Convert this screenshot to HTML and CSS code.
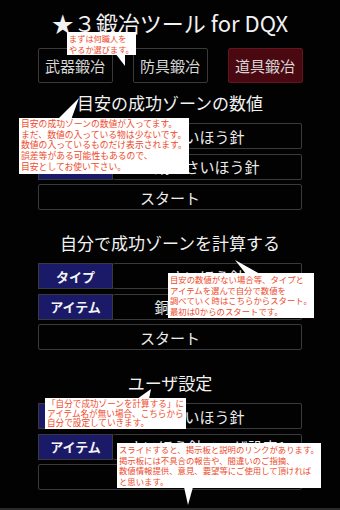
FILE: index.html
```html
<!DOCTYPE html>
<html lang="ja">
  <head>
    <meta charset="UTF-8" />
    <meta name="viewport" content="width=device-width, initial-scale=1.0" />
    <title>★３鍛冶ツール for DQX</title>
    <link rel="stylesheet" href="styles.css">
  </head>
  <body>
    <div class="screen">
      <h1 class="title">★３鍛冶ツール for DQX</h1>

      <div class="jobs">
        <div class="job">武器鍛冶</div>
        <div class="job">防具鍛冶</div>
        <div class="job active">道具鍛冶</div>
      </div>

      <section class="group">
        <h2>目安の成功ゾーンの数値</h2>
        <div class="row"><div class="label">タイプ</div><div class="value">さいほう針</div></div>
        <div class="row"><div class="label">アイテム</div><div class="value">銅のさいほう針</div></div>
        <div class="row"><div class="value">スタート</div></div>
      </section>

      <section class="group">
        <h2>自分で成功ゾーンを計算する</h2>
        <div class="row"><div class="label">タイプ</div><div class="value">さいほう針</div></div>
        <div class="row"><div class="label">アイテム</div><div class="value">銅のさいほう針</div></div>
        <div class="row"><div class="value">スタート</div></div>
      </section>

      <section class="group">
        <h2>ユーザ設定</h2>
        <div class="row"><div class="label">タイプ</div><div class="value">さいほう針</div></div>
        <div class="row"><div class="label">アイテム</div><div class="value">さいほう針ユーザ設定1</div></div>
        <div class="row"><div class="value">スタート</div></div>
      </section>

      <!-- help balloons laid over the screen -->
      <div class="tip tip-job">
        まずは何職人を<br>やるか選びます。
        <svg class="tail" width="80" height="80"><polygon points="48,21 58,21 58,34" /></svg>
      </div>
      <div class="tip tip-zone">
        目安の成功ゾーンの数値が入ってます。<br>
        まだ、数値の入っている物は少ないです。<br>
        数値の入っているものだけ表示されます。<br>
        誤差等がある可能性もあるので、<br>
        目安としてお使い下さい。
        <svg class="tail up" width="80" height="24"><polygon points="38,24 52,24 60,2" /></svg>
      </div>
      <div class="tip tip-calc">
        目安の数値がない場合等、タイプと<br>
        アイテムを選んで自分で数値を<br>
        調べていく時はこちらからスタート。<br>
        最初は0からのスタートです。
        <svg class="tail up-s" width="100" height="16"><polygon points="67,2 78,16 92,16" /></svg>
      </div>
      <div class="tip tip-user">
        「自分で成功ゾーンを計算する」に<br>
        アイテム名が無い場合、こちらから<br>
        自分で設定していきます。
        <svg class="tail up-xs" width="120" height="12"><polygon points="92,12 104,12 106,2" /></svg>
      </div>
      <div class="tip tip-link">
        スライドすると、掲示板と説明のリンクがあります。<br>
        掲示板には不具合の報告や、間違いのご指摘、<br>
        数値情報提供、意見、要望等にご使用して頂ければ<br>
        と思います。
        <svg class="tail" width="90" height="70"><polygon points="67,44 76,44 71,62" /></svg>
      </div>
    </div>
  </body>
</html>
```

FILE: styles.css
```css
:root {
  --bg: #020202;
  --text: #ececec;
  --line: #3a3a3a;
  --navy: #1b1a68;
  --tip-red: #ee4a2c;
  --font: 'Noto Sans CJK JP', 'Noto Sans', sans-serif;
}
html, body {
  margin: 0;
  background: var(--bg);
  color: var(--text);
  font-family: var(--font);
}
.screen {
  position: relative;
  width: 340px;
  height: 510px;
  padding-top: 8px;
  box-sizing: border-box;
  overflow: hidden;
  border-bottom: 2px solid #2a2a2a;
}
.title {
  margin: 0;
  font-size: 22px;
  font-weight: 400;
  line-height: 28px;
  text-align: center;
  color: #f2f2f2;
}
.jobs {
  display: flex;
  justify-content: center;
  gap: 20px;
  margin-top: 12px;
}
.job {
  width: 75px;
  height: 35px;
  box-sizing: border-box;
  border: 1px solid var(--line);
  border-radius: 2px;
  display: flex;
  align-items: center;
  justify-content: center;
  font-size: 15px;
  color: #d8d8d8;
}
.job.active { background: #4a0911; border-color: #62151e; }

.group {
  width: 264px;
  margin: 21px auto 0;
  display: flex;
  flex-direction: column;
  gap: 4.5px;
}
.group:first-of-type { margin-top: 8px; }
.group h2 {
  margin: 0 0 3.5px;
  font-size: 17px;
  font-weight: 400;
  line-height: 24px;
  text-align: center;
  color: #f2f2f2;
}
.row {
  display: flex;
  height: 26px;
}
.label {
  width: 75px;
  box-sizing: border-box;
  background: var(--navy);
  border: 1px solid var(--line);
  display: flex;
  align-items: center;
  justify-content: center;
  font-size: 13px;
  font-weight: 700;
  color: #f4f4f4;
}
.value {
  flex: 1;
  box-sizing: border-box;
  border: 1px solid var(--line);
  border-radius: 2px;
  display: flex;
  align-items: center;
  justify-content: center;
  font-size: 15px;
  color: var(--text);
}
.label + .value { border-left: none; }

/* balloons */
.tip {
  position: absolute;
  background: #fff;
  color: var(--tip-red);
  font-size: 8.6px;
  line-height: 10.7px;
  padding: 1px 2px;
  white-space: nowrap;
}
.tail {
  position: absolute;
  left: 0;
  top: 0;
  overflow: visible;
  fill: #fff;
}
.tail.up { top: -22px; }
.tail.up-s { top: -15px; }
.tail.up-xs { top: -11px; }
.tip-job { left: 67px; top: 32px; font-size: 8.2px; }
.tip-zone { left: 19px; top: 118px; font-size: 8.8px; }
.tip-calc { left: 168px; top: 273px; font-size: 8.4px; }
.tip-user { left: 45px; top: 398px; line-height: 9.5px; }
.tip-link { left: 117px; top: 443px; font-size: 8.4px; }
```
